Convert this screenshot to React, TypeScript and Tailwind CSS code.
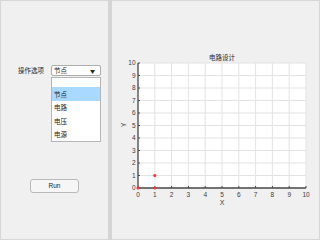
import React from 'react';

const cjk = '"Noto Sans CJK SC", "Noto Sans", sans-serif';

function CircuitChart() {
  const x0 = 26;
  const x1 = 194;
  const yTop = 18;
  const y0 = 143;
  const sx = (v: number) => x0 + ((x1 - x0) * v) / 10;
  const sy = (v: number) => y0 - ((y0 - yTop) * v) / 10;
  const ticks = [0, 1, 2, 3, 4, 5, 6, 7, 8, 9, 10];
  const points = [
    [0, 0],
    [1, 0],
    [1, 1],
  ];

  return (
    <svg width={207} height={170} className="block">
      <rect x={x0} y={yTop} width={x1 - x0} height={y0 - yTop} fill="#ffffff" />
      {ticks.map((t) => (
        <g key={t}>
          <line x1={sx(t)} y1={yTop} x2={sx(t)} y2={y0} stroke="#e3e3e3" strokeWidth={1} />
          <line x1={x0} y1={sy(t)} x2={x1} y2={sy(t)} stroke="#e3e3e3" strokeWidth={1} />
        </g>
      ))}
      <line x1={x0} y1={yTop} x2={x0} y2={y0} stroke="#4a4a4a" strokeWidth={1.3} />
      <line x1={x0} y1={y0} x2={x1} y2={y0} stroke="#4a4a4a" strokeWidth={1.3} />
      {ticks.map((t) => (
        <g key={'t' + t}>
          <line x1={sx(t)} y1={y0} x2={sx(t)} y2={y0 - 2} stroke="#4a4a4a" strokeWidth={1} />
          <line x1={x0} y1={sy(t)} x2={x0 + 2} y2={sy(t)} stroke="#4a4a4a" strokeWidth={1} />
          <text
            x={sx(t)}
            y={y0 + 8.5}
            textAnchor="middle"
            fontSize={6.5}
            fill="#3a3a3a"
            fontFamily='"Liberation Sans", sans-serif'
          >
            {t}
          </text>
          <text
            x={x0 - 2.5}
            y={sy(t) + 2.3}
            textAnchor="end"
            fontSize={6.5}
            fill="#3a3a3a"
            fontFamily='"Liberation Sans", sans-serif'
          >
            {t}
          </text>
        </g>
      ))}
      {points.map(([px, py], i) => (
        <circle key={i} cx={sx(px)} cy={sy(py)} r={1.6} fill="#ff3030" />
      ))}
      <text x={110} y={15} textAnchor="middle" fontSize={6.5} fill="#262626" fontFamily={cjk}>
        电路设计
      </text>
      <text x={110} y={160} textAnchor="middle" fontSize={7} fill="#3a3a3a" fontFamily='"Liberation Sans", sans-serif'>
        X
      </text>
      <text
        x={12}
        y={82}
        textAnchor="middle"
        fontSize={7}
        fill="#3a3a3a"
        fontFamily='"Liberation Sans", sans-serif'
        transform="rotate(-90 12 80)"
      >
        Y
      </text>
    </svg>
  );
}

export default function App() {
  const options = ['节点', '电路', '电压', '电源'];

  return (
    <div className="w-[320px] h-[240px] bg-[#f0f0f0] flex overflow-hidden">
      {/* Control panel */}
      <div className="w-[109px] h-full border border-[#d6d6d6] flex flex-col">
        <div className="mt-[64px] flex items-center" style={{ fontFamily: cjk }}>
          <span className="ml-[17px] w-[33px] text-[6.5px] text-[#262626] leading-none">操作选项</span>
          <div className="w-[50px] h-[11px] bg-white border border-[#adadad] rounded-[2px] flex items-center justify-between px-[2px]">
            <span className="text-[6.5px] leading-none text-[#222]">节点</span>
            <span className="text-[5px] leading-none text-[#222] mr-[3px]">▼</span>
          </div>
        </div>
        <div
          className="ml-[50px] mt-[1px] w-[50px] h-[65px] bg-white border border-[#b5b5b5] flex flex-col"
          style={{ fontFamily: cjk }}
        >
          <div className="h-[9px]" />
          {options.map((o, i) => (
            <div
              key={o}
              className={`h-[13.5px] flex items-center px-[2px] text-[6.5px] leading-none text-[#222] ${
                i === 0 ? 'bg-[#a9d9ff]' : ''
              }`}
            >
              {o}
            </div>
          ))}
        </div>
        <button className="ml-[29px] mt-[37px] w-[49px] h-[14px] bg-[#f6f6f6] border border-[#b9b9b9] rounded-[3px] text-[6.5px] leading-none text-[#222] font-['Liberation_Sans',sans-serif]">
          Run
        </button>
      </div>

      {/* Divider */}
      <div className="w-[2px] h-full bg-[#d4d4d4]" />

      {/* Chart panel */}
      <div className="flex-1 h-full border border-[#d6d6d6]">
        <div className="mt-[44px]">
          <CircuitChart />
        </div>
      </div>
    </div>
  );
}
